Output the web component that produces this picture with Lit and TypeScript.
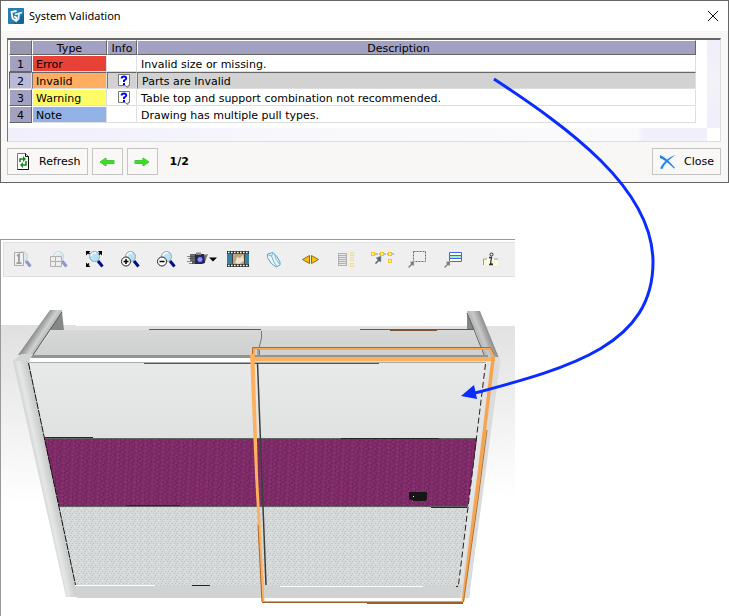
import { LitElement, html, svg, css } from "lit";
import { customElement, property } from "lit/decorators.js";
import { classMap } from "lit/directives/class-map.js";

type Severity = "error" | "invalid" | "warning" | "note";

interface Issue {
  type: Severity;
  label: string;
  help: boolean;
  text: string;
}

const ISSUES: Issue[] = [
  { type: "error", label: "Error", help: false, text: "Invalid size or missing." },
  { type: "invalid", label: "Invalid", help: true, text: "Parts are Invalid" },
  { type: "warning", label: "Warning", help: true, text: "Table top and support combination not recommended." },
  { type: "note", label: "Note", help: false, text: "Drawing has multiple pull types." },
];

@customElement("validation-dialog")
export class ValidationDialog extends LitElement {
  @property({ type: Number }) selected = 1;

  static styles = css`
    :host {
      display: block;
      box-sizing: border-box;
      border: 1px solid #666;
      background: #f8f7f5;
      font-family: "DejaVu Sans", Verdana, sans-serif;
      font-size: 11px;
      color: #000;
    }
    svg { display: block; }
    .title {
      display: flex;
      align-items: center;
      height: 30px;
      padding: 0 9px 0 7px;
      gap: 5px;
      background: #fff;
    }
    .title h1 {
      flex: 1;
      margin: 0;
      font: 400 11px/16px "Noto Sans", "Open Sans", sans-serif;
    }
    .x { padding: 0; border: 0; background: none; }
    .grid {
      display: grid;
      grid-template-columns: 1fr 13px;
      margin: 7px 7px 0 6px;
      border: 1px solid #dedede;
      border-top: 2px solid #666;
      border-left-color: #777;
      background: #fff;
    }
    .rows { padding: 0 11px 5px 1px; }
    .vbar { background: linear-gradient(#f0effa, #f3f2f8 50%, #f0effa); }
    .hbar { height: 13px; background: linear-gradient(90deg, #f0effb, #f9f9fc 50%, #faf9fc 90%, #f0effa 91%); }
    .corner { background: #fff; }
    table {
      width: 100%;
      table-layout: fixed;
      border-collapse: separate;
      border-spacing: 0;
    }
    th, td {
      box-sizing: border-box;
      height: 17px;
      padding: 2px 3px 0;
      line-height: 13px;
      font-weight: 400;
      text-align: left;
      white-space: nowrap;
      overflow: hidden;
      border: 0 solid #dedede;
      border-right-width: 1px;
      border-bottom-width: 1px;
      border-top: 1px solid #fff;
    }
    td { padding-left: 4px; }
    td.type { padding-left: 3px; }
    th {
      background: #a2a1c1;
      text-align: center;
      border-top: 1px solid #fff;
      border-left: 1px solid #fff;
      border-right: 1px solid #666;
      border-bottom: 1px solid #666;
    }
    thead th { height: 15px; line-height: 11px; padding: 2px 0 0; }
    thead .wide { padding-right: 36px; }
    thead .stub { background: #9998ae; }
    .num { width: 23px; }
    .type { width: 75px; }
    .info { width: 30px; }
    td.help { padding: 0 0 0 4px; }
    td svg { margin: 0 auto; }
    td.type { border-left: 1px solid #fff; }
    .error { background: #e84138; }
    .invalid { background: #ffad60; }
    .warning { background: #fffb64; }
    .note { background: #93b2e7; }
    .picked th { background: #bab9d6; border-top-color: #666; border-left-color: #666; border-right-color: #ddd; border-bottom-color: #ddd; }
    .picked td { border-top-color: #666; border-left: 1px solid #777; }
    .picked td:not(.type) { background: #d2d2d2; }
    .actions {
      display: flex;
      align-items: center;
      gap: 4px;
      padding: 6px 7px 7px 6px;
    }
    .btn {
      display: flex;
      align-items: center;
      justify-content: center;
      box-sizing: border-box;
      height: 27px;
      min-width: 31px;
      margin: 0;
      padding: 0 6px;
      gap: 7px;
      border: 1px solid #c4c4c4;
      background: #f9f8f6;
      color: inherit;
      font: inherit;
    }
    .count { flex: 1; margin-left: 8px; font-weight: 700; }
  `;

  private help() {
    return svg`<svg width="12" height="14" viewBox="0 0 12 14" role="img" aria-label="Help">
      <path d="M.5.5h11v11h-1.500v2L7 11.500H.5z" fill="#fff" stroke="#777"/>
      <path d="M3.700 4.500V3.500Q4 2.500 6 2.500T8.300 4.200Q8.300 5.500 6 6.500V8" fill="none" stroke="#0000e8" stroke-width="1.900"/>
      <path d="M5 9h2v2H5z" fill="#0000e8"/></svg>`;
  }

  private arrow(d: string) {
    return svg`<svg width="16" height="12" viewBox="0 0 16 12"><path d=${d} fill="#38e01c" stroke="#6ae65a"/>
      <path d=${d} fill="none" stroke="#2aa820" stroke-width=".5"/></svg>`;
  }

  render() {
    return html`
      <div class="title">
        <svg width="16" height="16" viewBox="0 0 16 16">
          <rect width="16" height="16" rx="1" fill="#15659b"/>
          <path d="M0 0h16v5L5 16H0z" fill="#3190bd" opacity=".6"/>
          <path d="M8.500 3L3.500 4l1 6.500L8 13l.5-3.500L6 8.500" fill="none" stroke="#fff" stroke-width="1.800"/>
          <path d="M7 6.500l7-2M11 5.500l-.5 5.500L8 13" fill="none" stroke="#e6f4fb" stroke-width="1.800"/>
        </svg>
        <h1>System Validation</h1>
        <button class="x" aria-label="Close window">
          <svg width="12" height="12" viewBox="0 0 12 12"><path d="M1 1l10 10M11 1L1 11" stroke="#111"/></svg>
        </button>
      </div>
      <div class="grid">
        <div class="rows">
          <table>
            <thead>
              <tr>
                <th class="num stub"></th>
                <th class="type">Type</th>
                <th class="info">Info</th>
                <th class="wide">Description</th>
              </tr>
            </thead>
            <tbody>
              ${ISSUES.map(
                (issue, i) => html`<tr class=${classMap({ picked: i === this.selected })}>
                  <th scope="row">${i + 1}</th>
                  <td class="type ${issue.type}">${issue.label}</td>
                  <td class="help">${issue.help ? this.help() : ""}</td>
                  <td>${issue.text}</td>
                </tr>`
              )}
            </tbody>
          </table>
        </div>
        <div class="vbar"></div>
        <div class="hbar"></div>
        <div class="corner"></div>
      </div>
      <div class="actions">
        <button class="btn">
          <svg width="18" height="17" viewBox="0 0 18 17">
            <path d="M3.500.5h8l3 3v13h-11z" fill="#fff" stroke="#777"/>
            <path d="M11.500.5v3h3v13h-11" fill="none" stroke="#111"/>
            <path d="M6 9V6h4M12 8v4H8" fill="none" stroke="#128a1b" stroke-width="1.600"/>
            <path d="M9 3l3 3-3 3zM9 9v6l-3-3z" fill="#128a1b"/>
          </svg>
          Refresh
        </button>
        <button class="btn" aria-label="Previous">${this.arrow("M1 6l6-4v2.500h8v3H7V10z")}</button>
        <button class="btn" aria-label="Next">${this.arrow("M15 6L9 2v2.500H1v3h8V10z")}</button>
        <span class="count">1/2</span>
        <button class="btn">
          <svg width="18" height="16" viewBox="0 0 18 16">
            <path d="M1 1c5 2 10 7 15 13l-1 .5C10 9.500 6 6 1 4z" fill="#1f7fe8"/>
            <path d="M16.500 1C11 5 6 9 3.500 15l-2.500-.5C4 8 10 3 16.500 1z" fill="#2488f0"/>
          </svg>
          Close
        </button>
      </div>
    `;
  }
}

const lens = svg`
  <circle cx="11.500" cy="7.500" r="5" fill="#b9e3f5" stroke="#8ba9bd"/>
  <path d="M8 7a4 4 0 0 1 5-3" fill="none" stroke="#fff" stroke-width="1.500"/>
  <path d="M15 12l4.500 5.500" stroke="#00108c" stroke-width="3"/>`;

const star = (x: number, y: number) => svg`<rect x=${x + 0.5} y=${y + 0.5} width="3" height="3" fill="#fff27a" stroke="#f0c81e"/>`;
const pointer = svg`<path d="M7 12v5l-2-1-3 3-1-1 3-3-1-2z" fill="#777" stroke="#ccc" stroke-width=".5"/>`;

const TOOLS = [
  { name: "View one", off: true, icon: svg`${lens}<path d="M3.500 3.500h9v13h-9z" fill="#f4f4f4" stroke="#444"/><path d="M6 7l2-1.500V14M5.500 14.200h5" fill="none" stroke="#222" stroke-width="1.800"/>` },
  { name: "View four", off: true, icon: svg`${lens}<path d="M3.500 7.500h11v10h-11zM8.500 7v10M3.500 12.500h11" fill="#eee" stroke="#555"/>` },
  { name: "Zoom extents", icon: svg`${lens}<path d="M3 2h4.500L6 3.500l1 1-1 1-1-1L3 6.500zM19 2v4.500L17.500 5l-1 1-1-1 1-1L15 2zM3 18v-4.500L4.500 15l1-1 1 1-1 1L7.500 18z" fill="#000"/>` },
  { name: "Zoom in", icon: svg`${lens}<circle cx="7" cy="12.500" r="4.500" fill="#fff" stroke="#222"/><path d="M4.500 12.500h5M7 10v5" stroke="#000" stroke-width="1.500"/>` },
  { name: "Zoom out", icon: svg`${lens}<circle cx="7" cy="12.500" r="4.500" fill="#fff" stroke="#222"/><path d="M4.500 12.500h5" stroke="#000" stroke-width="1.500"/>` },
  { name: "Camera", wide: true, icon: svg`<path d="M0 7.500h9M1 9.500h7M-1 12.500h9M2 14.500h7" stroke="#8a8a8a"/><path d="M3 5h8v10H5V12H3z" fill="#3c3c46" opacity=".75"/><path d="M8 5h9l1 2v7l-3 1H8z" fill="#28283a"/><path d="M9 3.500h5V6H9z" fill="#888"/><circle cx="13" cy="10.500" r="3" fill="#8f94ff" stroke="#1a1a9c"/><path d="M17 6l4-1-3 8" fill="#777"/><path d="M22 8.500h8l-4 4z" fill="#000"/>` },
  { name: "Animation", wide: true, icon: svg`<path d="M4 2h22v16H4z" fill="#333"/><path d="M4 5h22v10H4z" fill="#3483a0"/><path d="M10 5h11v10H10z" fill="#bda27b"/><path d="M12 14l2-6 3 1 3-3 1 6-5 3z" fill="#eee2c9"/><path d="M9.500 5v10M21.500 5v10" stroke="#444"/><path d="M5 3.500h20M5 16.500h20" stroke="#fff" stroke-width="1.600" stroke-dasharray="1.600 1.400"/>` },
  { name: "Eraser", icon: svg`<path d="M4.500 5L10 3.500q4 3 7 9.500v3l-4 2Q7 15 4.500 8.500z" fill="#eef5f9" stroke="#5ba4cd"/><path d="M10 4l-1.500 3q2 6 5 10M8.500 7L4.500 5.500M11.500 5q1 6 5 10" fill="none" stroke="#6db2d6"/>` },
  { name: "Flip", icon: svg`<path d="M10.500 6.500v8l-7-4zM12.500 6.500v8l7-4z" fill="#ffc400" stroke="#8f6c18"/>` },
  { name: "List layout", off: true, icon: svg`<path d="M3 4h8v13H3z" fill="#ddd"/><path d="M3 4.500h8M3 6.500h8M3 8.500h8M3 10.500h8M3 12.500h8M3 14.500h8M3 16.500h8M3.500 4v13M11.500 4v13" stroke="#555"/>${star(15, 3)}${star(15, 8)}${star(15, 14)}` },
  { name: "Select chain", wide: true, icon: svg`<path d="M4 5h23" stroke="#6c8ce0" stroke-dasharray="3 1"/>${star(4, 3)}${star(13, 3)}${star(21, 3)}${star(21, 10)}<path d="M14 7v6l-2-1-3 3-1-1 3-3-2-2z" fill="#567" stroke="#99a" stroke-width=".5"/>` },
  { name: "Select area", icon: svg`<path d="M6.500 2.500h12v10h-12z" fill="none" stroke="#3f67e8" stroke-dasharray="2 1"/>${pointer}` },
  { name: "Select rows", icon: svg`<path d="M6.500 3.500h12v9h-12z" fill="#fff" stroke="#3f67e8"/><path d="M7 7h11v2H7z" fill="#9af0be"/><path d="M6 6.500h13M6 9.500h13" stroke="#3f67e8"/>${pointer}` },
  { name: "Information", icon: svg`<path d="M4 10h15v6H4z" fill="#ffffe0"/><path d="M4.500 16v-6H8M15 10h4" fill="none" stroke="#999"/><circle cx="12.500" cy="5.500" r="1.500" fill="#fff" stroke="#222"/><path d="M10 8.500h2.500L11.500 15h2M10 15.500h4" fill="none" stroke="#333" stroke-width="1.300"/>` },
];

@customElement("model-view")
export class ModelView extends LitElement {
  static styles = css`
    :host {
      display: block;
      box-sizing: border-box;
      border-top: 1px solid #999;
      border-left: 1px solid #999;
      background: #fff;
    }
    .tools {
      display: flex;
      box-sizing: border-box;
      height: 35px;
      margin: 2px 0 0 2px;
      border: 1px solid #dfdfdf;
      border-right: 0;
      background: #efefef;
    }
    .tool {
      display: flex;
      flex: 0 1 36px;
      align-items: center;
      justify-content: center;
      min-width: 0;
      padding: 0;
      border: 0;
      background: none;
    }
    .off { opacity: 0.4; }
    .tool svg { flex: none; }
    .scene { display: block; width: 100%; height: auto; }
  `;

  render() {
    return html`
      <div class="tools" role="toolbar">
        ${TOOLS.map(
          (t) => html`<button class="tool" aria-label=${t.name}>
            <svg class=${classMap({ off: !!t.off })} width=${t.wide ? 30 : 20} height="20" viewBox=${t.wide ? "0 1 30 20" : "1 1 20 20"}>${t.icon}</svg>
          </button>`
        )}
      </div>
      <svg class="scene" viewBox="1 277 514 339" role="img" aria-label="Cabinet with the right part highlighted">
        <defs>
          <linearGradient id="floor" x1="0" y1="0" x2="0.050" y2="1">
            <stop offset="0" stop-color="#e0e0e0"/><stop offset="1" stop-color="#fff"/>
          </linearGradient>
          <linearGradient id="top" x1="0" y1="0" x2="0" y2="1">
            <stop offset="0" stop-color="#d6d8d7"/><stop offset="1" stop-color="#cfd1d0"/>
          </linearGradient>
          <linearGradient id="panel" x1="0" y1="0" x2="0" y2="1">
            <stop offset="0" stop-color="#e7eae8"/><stop offset="1" stop-color="#dfe2e0"/>
          </linearGradient>
          <linearGradient id="post" gradientUnits="userSpaceOnUse" x1="38" y1="482" x2="52" y2="479">
            <stop offset="0" stop-color="#cdd1ce"/><stop offset=".4" stop-color="#e4e7e5"/><stop offset="1" stop-color="#c7cac8"/>
          </linearGradient>
          <linearGradient id="rail" gradientUnits="userSpaceOnUse" x1="34" y1="333" x2="46" y2="341">
            <stop offset="0" stop-color="#8e908f"/><stop offset=".5" stop-color="#d0d2d1"/><stop offset="1" stop-color="#a0a2a1"/>
          </linearGradient>
          <linearGradient id="railR" gradientUnits="userSpaceOnUse" x1="475" y1="336" x2="488" y2="331">
            <stop offset="0" stop-color="#a9abaa"/><stop offset=".45" stop-color="#c8cac9"/><stop offset="1" stop-color="#8c8e8d"/>
          </linearGradient>
          <pattern id="weave" width="9" height="8" patternUnits="userSpaceOnUse" patternTransform="rotate(3)">
            <rect width="9" height="8" fill="#7f2b68"/>
            <path d="M0 1h2M5 3h3M1 5h2M6 7h2" stroke="#923879"/>
            <path d="M3 1h1M8 1h1M1 3h1M4 5h1M8 5h1M2 7h1" stroke="#541b47"/>
          </pattern>
          <pattern id="cloth" width="7" height="6" patternUnits="userSpaceOnUse">
            <rect width="7" height="6" fill="#d6d9d9"/>
            <path d="M0 1.500h1M4 1.500h1M2 3.500h1M6 3.500h1M1 5.500h1" stroke="#c2bfbb"/>
            <path d="M2 1.500h1M4 4.500h2" stroke="#dee1e1"/>
          </pattern>
        </defs>
        <path d="M1 325h75v1h439v180H1z" fill="url(#floor)"/>
        <path d="M52 330h420l16 27H32z" fill="url(#top)"/>
        <path d="M62 312l2 18H50z" fill="#868886"/>
        <path d="M50 310h12v2L33 355H18z" fill="url(#rail)"/>
        <path d="M62 312L33 355" stroke="#555"/>
        <path d="M467 312v18h9z" fill="#858785"/>
        <path d="M467 311h13l19 47h-13z" fill="url(#railR)"/>
        <path d="M467 313l18 44" stroke="#666"/>
        <path d="M149 329.500h112M360 329.500h113" stroke="#7b5431"/>
        <path d="M390 330h47" stroke="#7b5431" stroke-width="2"/>
        <path d="M261.500 331v7l-2 8v10" fill="none" stroke="#777"/>
        <path d="M28 363h468l-27 235H77z" fill="#d0d3d1"/>
        <path d="M29 363h457l-9 76H44z" fill="url(#panel)"/>
        <path d="M486 363h12l-30 222h-10z" fill="#e2e5e3"/>
        <path d="M31 355h457v3H31z" fill="#929492"/>
        <path d="M30 358h462v4H30z" fill="#fff"/>
        <path d="M29 362.500h457" stroke="#aaa"/>
        <path d="M144 363.500h235" stroke="#555"/>
        <path d="M44 439h433l-9 68H59z" fill="url(#weave)"/>
        <path d="M59 507h409l-10 79H75z" fill="url(#cloth)"/>
        <path d="M44 438.500h433M59 506.500h409" stroke="#626262"/>
        <path d="M45 437.500h48M341 438.500h98M126 505.500h54M431 507.500h36" stroke="#272727"/>
        <path d="M21 354h12l-5 9-15-2z" fill="#d4d6d5"/>
        <path d="M13 361h15l49 236H66z" fill="url(#post)"/>
        <path d="M486 357h13l2 5-7 3z" fill="#dcdedd"/>
        <path d="M493 363h7l-31 235h-9z" fill="#d9dcda"/>
        <path d="M28.500 363L75.500 585" stroke="#111" stroke-dasharray="7 1"/>
        <path d="M485.500 364L458.500 585" stroke="#222" stroke-dasharray="6 3"/>
        <path d="M257.500 363l8.500 222" stroke="#3c3e3e" stroke-width="1.500"/>
        <path d="M75 585.500h80M280 586.500h143" stroke="#fff"/>
        <path d="M192 585.500h18M456 586.500h2" stroke="#222"/>
        <path d="M409 492h18v8h-1v1h-13v-1h-4z" fill="#171717"/>
        <path d="M413 496h1v1h-1z" fill="#fff"/>
        <path d="M265 598h195v4H265z" fill="#fff"/>
        <path d="M252.500 357v-9.500h238l4 8" fill="none" stroke="#a96b30"/>
        <path d="M254 357v-8h236l4 8" fill="none" stroke="#f9a757" stroke-width="1.800"/>
        <path d="M258 349v6" stroke="#777"/>
        <path d="M252 357h243v4.500H252z" fill="#ffb05e"/>
        <path d="M250 354h4.500l3.500 121 6.500 127h-2.500l-7-127z" fill="#ffb05e"/>
        <path d="M258 525l4 77" fill="none" stroke="#a8682e"/>
        <path d="M491.500 357h3.500l-13 108-18 137h-2.500l17-137z" fill="#f7a452"/>
        <path d="M487 430l-9 70-14.500 102" fill="none" stroke="#b47233"/>
        <path d="M262 601.500h201" stroke="#ee9e51"/>
        <path d="M262 602.500h201M367 603.500h96" stroke="#98602e"/>
      </svg>
    `;
  }
}

@customElement("app-root")
export class AppRoot extends LitElement {
  static styles = css`
    :host {
      display: grid;
      grid-template-columns: 515fr 214fr;
      row-gap: 56px;
      position: relative;
      overflow: hidden;
      background: #fff;
    }
    validation-dialog { grid-column: 1 / -1; }
    .callout {
      position: absolute;
      top: 0;
      left: 0;
      width: 100%;
      pointer-events: none;
    }
  `;

  render() {
    return html`
      <validation-dialog></validation-dialog>
      <model-view></model-view>
      <svg class="callout" viewBox="0 0 729 616" aria-hidden="true">
        <path d="M494 79C567 127 653 188 653 262C653 344 573 367 475 393" fill="none" stroke="#0a2cff" stroke-width="3"/>
        <path d="M461 396l13-11 3 14z" fill="#0a2cff"/>
      </svg>
    `;
  }
}
